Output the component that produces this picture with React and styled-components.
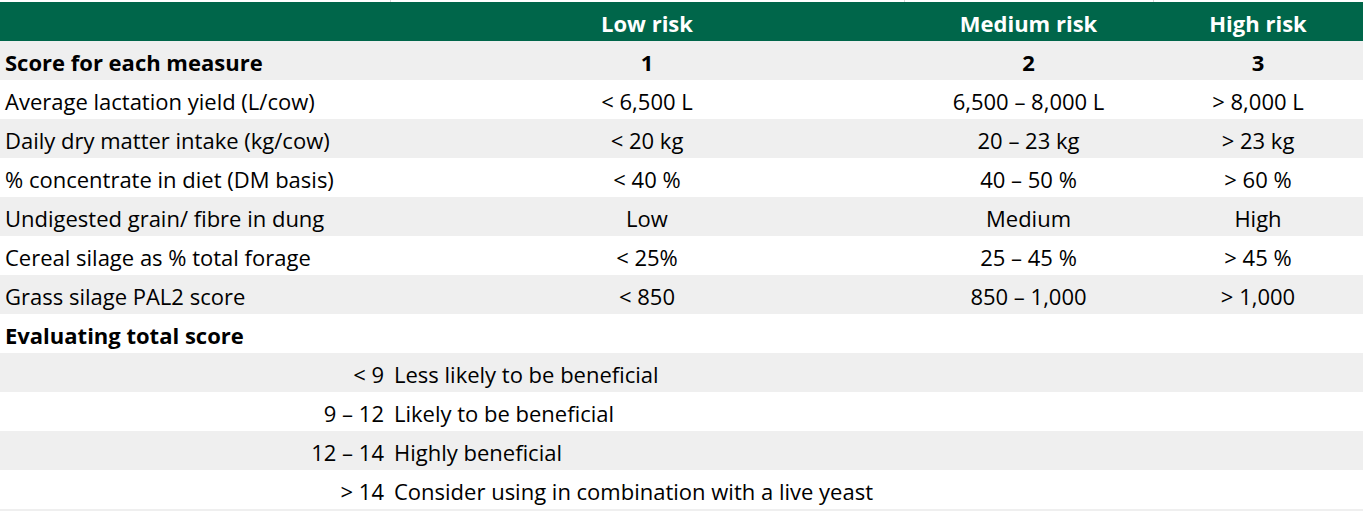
import React from "react";
import styled, { createGlobalStyle } from "styled-components";

const Global = createGlobalStyle`
  html, body { margin: 0; padding: 0; background: #ffffff; }
  body { font-family: "Open Sans", "Noto Sans", sans-serif; color: #000; }
`;

const Page = styled.div`
  width: 1363px;
  height: 511px;
  overflow: hidden;
  background: #fff;
`;

const TopStrip = styled.div`
  display: grid;
  grid-template-columns: 390px 514px 249px 210px;
  height: 2px;
`;

const StripCell = styled.div`
  border-left: ${(p) => (p.$line ? "1px solid #d9d9d9" : "none")};
`;

const Row = styled.div`
  display: grid;
  grid-template-columns: 390px 514px 249px 210px;
  height: 39px;
  background: ${(p) => (p.$tone === "head" ? "#00664a" : p.$tone === "grey" ? "#efefef" : "#ffffff")};
  color: ${(p) => (p.$tone === "head" ? "#ffffff" : "#000000")};
`;

const Cell = styled.div`
  box-sizing: border-box;
  height: 39px;
  font-size: 22px;
  line-height: 35px;
  padding-top: 4px;
  white-space: nowrap;
  font-weight: ${(p) => (p.$bold ? 700 : 400)};
  text-align: ${(p) => p.$align || "left"};
  padding-left: ${(p) => (p.$align ? "0" : "5px")};
  padding-right: ${(p) => (p.$align === "right" ? "6px" : "0")};
`;

const WideCell = styled(Cell)`
  grid-column: 2 / span 3;
  padding-left: 4px;
`;

const BottomStrip = styled.div`
  height: 2px;
  background: #efefef;
`;

const measures = [
  ["Average lactation yield (L/cow)", "< 6,500 L", "6,500 – 8,000 L", "> 8,000 L"],
  ["Daily dry matter intake (kg/cow)", "< 20 kg", "20 – 23 kg", "> 23 kg"],
  ["% concentrate in diet (DM basis)", "< 40 %", "40 – 50 %", "> 60 %"],
  ["Undigested grain/ fibre in dung", "Low", "Medium", "High"],
  ["Cereal silage as % total forage", "< 25%", "25 – 45 %", "> 45 %"],
  ["Grass silage PAL2 score", "< 850", "850 – 1,000", "> 1,000"],
];

const evaluation = [
  ["< 9", "Less likely to be beneficial"],
  ["9 – 12", "Likely to be beneficial"],
  ["12 – 14", "Highly beneficial"],
  ["> 14", "Consider using in combination with a live yeast"],
];

export default function App() {
  let idx = 0;
  const tone = () => (idx++ % 2 === 0 ? "grey" : "white");
  return (
    <Page>
      <Global />
      <TopStrip>
        <StripCell />
        <StripCell $line />
        <StripCell $line />
        <StripCell $line />
      </TopStrip>
      <Row $tone="head">
        <Cell />
        <Cell $bold $align="center">Low risk</Cell>
        <Cell $bold $align="center">Medium risk</Cell>
        <Cell $bold $align="center">High risk</Cell>
      </Row>
      <Row $tone={tone()}>
        <Cell $bold>Score for each measure</Cell>
        <Cell $bold $align="center">1</Cell>
        <Cell $bold $align="center">2</Cell>
        <Cell $bold $align="center">3</Cell>
      </Row>
      {measures.map((m) => (
        <Row key={m[0]} $tone={tone()}>
          <Cell>{m[0]}</Cell>
          <Cell $align="center">{m[1]}</Cell>
          <Cell $align="center">{m[2]}</Cell>
          <Cell $align="center">{m[3]}</Cell>
        </Row>
      ))}
      <Row $tone={tone()}>
        <Cell $bold>Evaluating total score</Cell>
      </Row>
      {evaluation.map((e) => (
        <Row key={e[0]} $tone={tone()}>
          <Cell $align="right">{e[0]}</Cell>
          <WideCell>{e[1]}</WideCell>
        </Row>
      ))}
      <BottomStrip />
    </Page>
  );
}
